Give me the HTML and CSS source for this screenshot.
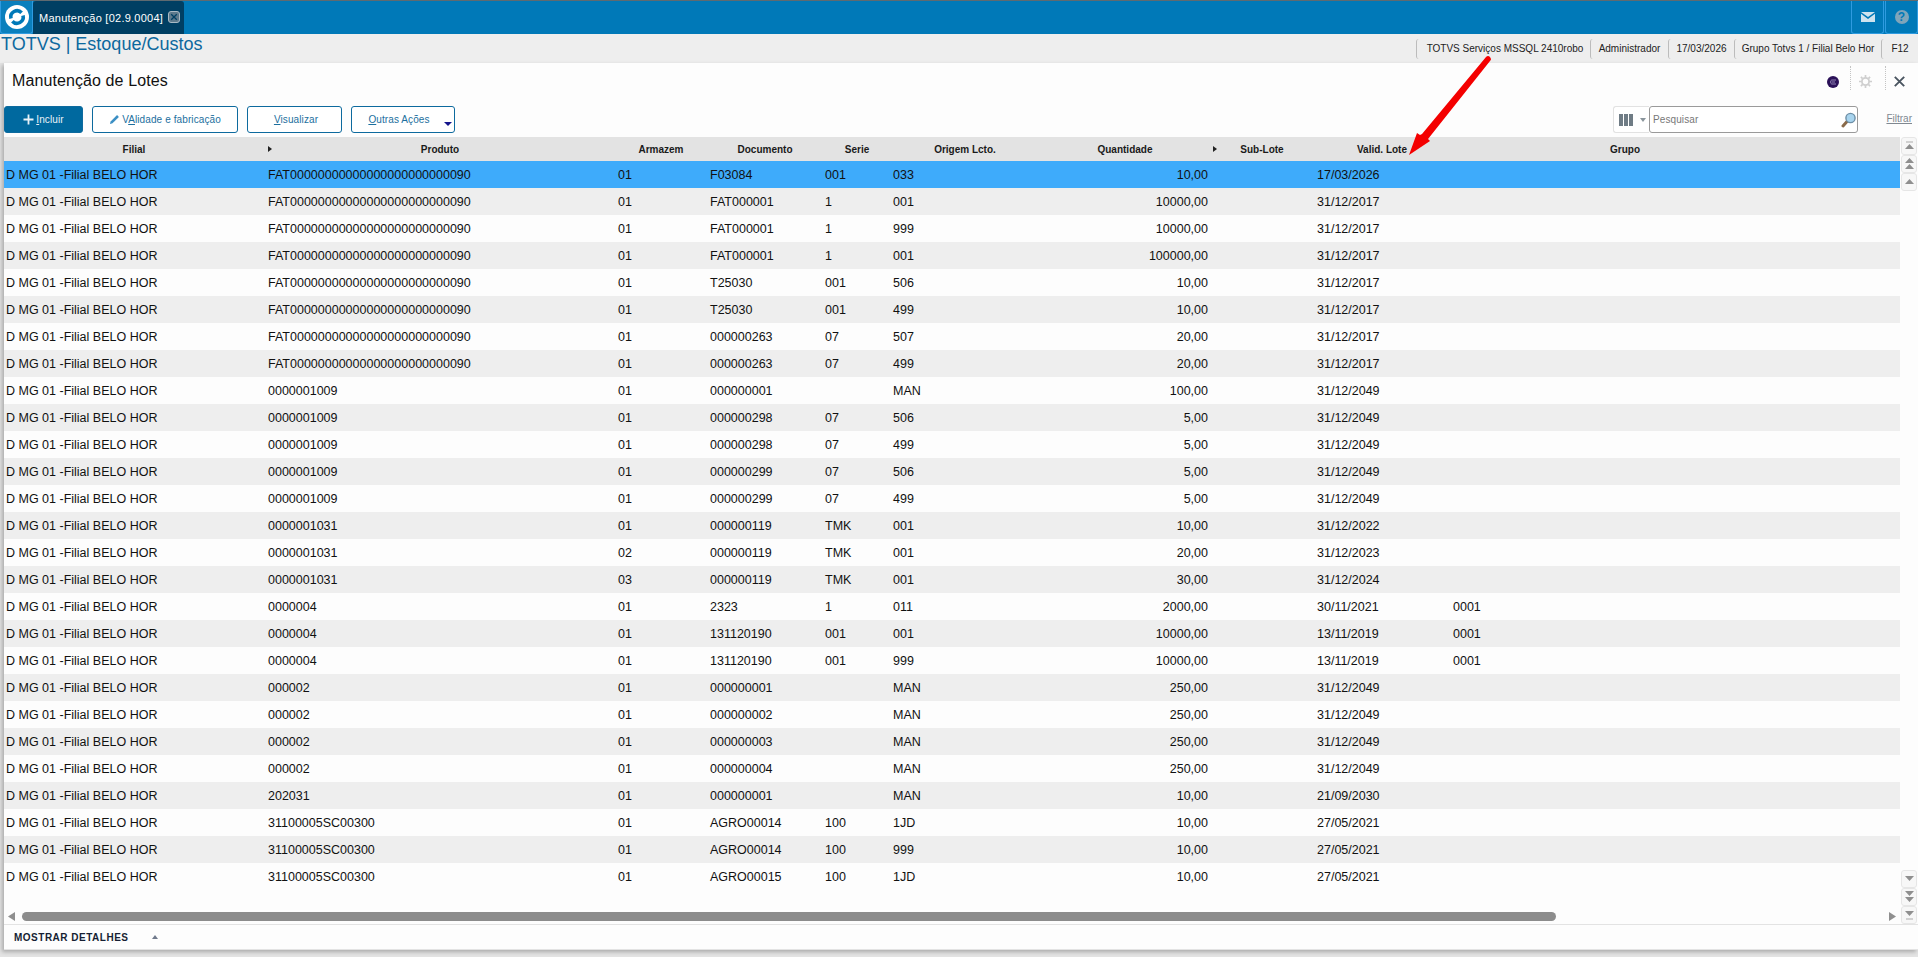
FILE: index.html
```html
<!DOCTYPE html>
<html lang="pt-BR">
<head>
<meta charset="utf-8">
<title>Manutenção de Lotes</title>
<link rel="stylesheet" href="styles.css">
</head>
<body>
<header class="topbar">
  <div class="logo-box">
    <svg width="24" height="24" viewBox="0 0 24 24"><circle cx="12" cy="12" r="12" fill="#fff"/><path d="M6 13.5A6.2 6.2 0 0 1 16.6 7.8" fill="none" stroke="#0079b8" stroke-width="3.6"/><path d="M18 10.5A6.2 6.2 0 0 1 7.4 16.2" fill="none" stroke="#0079b8" stroke-width="3.6"/></svg>
  </div>
  <div class="tab">
    <span class="tab-label">Manutenção [02.9.0004]</span>
    <svg width="12" height="12" viewBox="0 0 12 12"><rect x=".5" y=".5" width="11" height="11" rx="2.5" fill="#5d7a8c" stroke="#a9b9c4"/><path d="M3.2 3.2l5.6 5.6M8.8 3.2l-5.6 5.6" stroke="#003f63" stroke-width="1.3"/></svg>
  </div>
  <div class="topbar-spacer"></div>
  <div class="top-btn">
    <svg width="14" height="10" viewBox="0 0 14 10"><path d="M0 0h14L7 5Z" fill="#cfe3ee"/><path d="M0 1.8V10h14V1.8L7 7Z" fill="#cfe3ee"/></svg>
  </div>
  <div class="top-btn">
    <span class="help">?</span>
  </div>
</header>

<div class="subbar">
  <div class="brand">TOTVS | Estoque/Custos</div>
  <div class="status">
    <span class="status-item s1">TOTVS Serviços MSSQL 2410robo</span>
    <span class="status-item s2">Administrador</span>
    <span class="status-item s3">17/03/2026</span>
    <span class="status-item s4">Grupo Totvs 1 / Filial Belo Hor</span>
    <span class="status-item s5">F12</span>
  </div>
</div>

<main class="panel">
  <div class="title-row">
    <h1 class="title">Manutenção de Lotes</h1>
    <div class="title-icons">
      <span class="orb"><svg width="8" height="6" viewBox="0 0 8 6"><path d="M7 1H3C1 1 1 5 3 5H7M2.5 3H6" fill="none" stroke="#9d90c0" stroke-width=".9"/></svg></span>
      <span class="dots"></span>
      <svg class="gear" width="13" height="13" viewBox="0 0 13 13"><circle cx="6.5" cy="6.5" r="3.6" fill="none" stroke="#cfcfcf" stroke-width="1.8"/><path d="M6.5 0v2.4M6.5 10.6V13M0 6.5h2.4M10.6 6.5H13M1.9 1.9l1.7 1.7M9.4 9.4l1.7 1.7M11.1 1.9L9.4 3.6M3.6 9.4l-1.7 1.7" stroke="#cfcfcf" stroke-width="1.7"/></svg>
      <span class="dots"></span>
      <svg class="close" width="11" height="11" viewBox="0 0 11 11"><path d="M.8.8l9.4 9.4M10.2.8L.8 10.2" stroke="#4a5560" stroke-width="1.9"/></svg>
    </div>
  </div>

  <div class="toolbar">
    <button class="btn primary w1"><svg width="11" height="11" viewBox="0 0 11 11"><path d="M5.5 .5v10M.5 5.5h10" stroke="#e8f2f8" stroke-width="1.8"/></svg><span><u>I</u>ncluir</span></button>
    <button class="btn w2"><svg width="11" height="11" viewBox="0 0 12 12"><path d="M1 11l.8-2.8L8.8 1.2l2 2-7 7Z" fill="#3b8fc4"/></svg><span>V<u>A</u>lidade e fabricação</span></button>
    <button class="btn w3"><span><u>V</u>isualizar</span></button>
    <button class="btn w4"><span><u>O</u>utras Ações</span><i class="btn-caret"></i></button>
    <div class="tool-spacer"></div>
    <div class="columns-btn"><i class="bar"></i><i class="bar"></i><i class="bar"></i><i class="mini-caret"></i></div>
    <div class="search">
      <span class="search-text">Pesquisar</span>
      <svg width="15" height="16" viewBox="0 0 15 16"><path d="M6 9.5L2 14" stroke="#8a6a4a" stroke-width="3" stroke-linecap="round"/><circle cx="9.5" cy="6" r="4.6" fill="#a8d4ee" stroke="#6d8fa6" stroke-width="1.4"/></svg>
    </div>
    <a class="filter">Filtrar</a>
  </div>

  <div class="table-area">
    <div class="table">
      <div class="row head">
        <span class="c c1">Filial<i class="marker"></i></span>
        <span class="c c2">Produto</span>
        <span class="c c3">Armazem</span>
        <span class="c c4">Documento</span>
        <span class="c c5">Serie</span>
        <span class="c c6">Origem Lcto.</span>
        <span class="c c7">Quantidade<i class="marker"></i></span>
        <span class="c c8">Sub-Lote</span>
        <span class="c c9">Valid. Lote</span>
        <span class="c c10">Grupo</span>
      </div>
      <div class="row sel"><span class="c c1">D MG 01 -Filial BELO HOR</span><span class="c c2">FAT00000000000000000000000090</span><span class="c c3">01</span><span class="c c4">F03084</span><span class="c c5">001</span><span class="c c6">033</span><span class="c c7">10,00</span><span class="c c8"></span><span class="c c9">17/03/2026</span><span class="c c10"></span></div>
      <div class="row"><span class="c c1">D MG 01 -Filial BELO HOR</span><span class="c c2">FAT00000000000000000000000090</span><span class="c c3">01</span><span class="c c4">FAT000001</span><span class="c c5">1</span><span class="c c6">001</span><span class="c c7">10000,00</span><span class="c c8"></span><span class="c c9">31/12/2017</span><span class="c c10"></span></div>
      <div class="row"><span class="c c1">D MG 01 -Filial BELO HOR</span><span class="c c2">FAT00000000000000000000000090</span><span class="c c3">01</span><span class="c c4">FAT000001</span><span class="c c5">1</span><span class="c c6">999</span><span class="c c7">10000,00</span><span class="c c8"></span><span class="c c9">31/12/2017</span><span class="c c10"></span></div>
      <div class="row"><span class="c c1">D MG 01 -Filial BELO HOR</span><span class="c c2">FAT00000000000000000000000090</span><span class="c c3">01</span><span class="c c4">FAT000001</span><span class="c c5">1</span><span class="c c6">001</span><span class="c c7">100000,00</span><span class="c c8"></span><span class="c c9">31/12/2017</span><span class="c c10"></span></div>
      <div class="row"><span class="c c1">D MG 01 -Filial BELO HOR</span><span class="c c2">FAT00000000000000000000000090</span><span class="c c3">01</span><span class="c c4">T25030</span><span class="c c5">001</span><span class="c c6">506</span><span class="c c7">10,00</span><span class="c c8"></span><span class="c c9">31/12/2017</span><span class="c c10"></span></div>
      <div class="row"><span class="c c1">D MG 01 -Filial BELO HOR</span><span class="c c2">FAT00000000000000000000000090</span><span class="c c3">01</span><span class="c c4">T25030</span><span class="c c5">001</span><span class="c c6">499</span><span class="c c7">10,00</span><span class="c c8"></span><span class="c c9">31/12/2017</span><span class="c c10"></span></div>
      <div class="row"><span class="c c1">D MG 01 -Filial BELO HOR</span><span class="c c2">FAT00000000000000000000000090</span><span class="c c3">01</span><span class="c c4">000000263</span><span class="c c5">07</span><span class="c c6">507</span><span class="c c7">20,00</span><span class="c c8"></span><span class="c c9">31/12/2017</span><span class="c c10"></span></div>
      <div class="row"><span class="c c1">D MG 01 -Filial BELO HOR</span><span class="c c2">FAT00000000000000000000000090</span><span class="c c3">01</span><span class="c c4">000000263</span><span class="c c5">07</span><span class="c c6">499</span><span class="c c7">20,00</span><span class="c c8"></span><span class="c c9">31/12/2017</span><span class="c c10"></span></div>
      <div class="row"><span class="c c1">D MG 01 -Filial BELO HOR</span><span class="c c2">0000001009</span><span class="c c3">01</span><span class="c c4">000000001</span><span class="c c5"></span><span class="c c6">MAN</span><span class="c c7">100,00</span><span class="c c8"></span><span class="c c9">31/12/2049</span><span class="c c10"></span></div>
      <div class="row"><span class="c c1">D MG 01 -Filial BELO HOR</span><span class="c c2">0000001009</span><span class="c c3">01</span><span class="c c4">000000298</span><span class="c c5">07</span><span class="c c6">506</span><span class="c c7">5,00</span><span class="c c8"></span><span class="c c9">31/12/2049</span><span class="c c10"></span></div>
      <div class="row"><span class="c c1">D MG 01 -Filial BELO HOR</span><span class="c c2">0000001009</span><span class="c c3">01</span><span class="c c4">000000298</span><span class="c c5">07</span><span class="c c6">499</span><span class="c c7">5,00</span><span class="c c8"></span><span class="c c9">31/12/2049</span><span class="c c10"></span></div>
      <div class="row"><span class="c c1">D MG 01 -Filial BELO HOR</span><span class="c c2">0000001009</span><span class="c c3">01</span><span class="c c4">000000299</span><span class="c c5">07</span><span class="c c6">506</span><span class="c c7">5,00</span><span class="c c8"></span><span class="c c9">31/12/2049</span><span class="c c10"></span></div>
      <div class="row"><span class="c c1">D MG 01 -Filial BELO HOR</span><span class="c c2">0000001009</span><span class="c c3">01</span><span class="c c4">000000299</span><span class="c c5">07</span><span class="c c6">499</span><span class="c c7">5,00</span><span class="c c8"></span><span class="c c9">31/12/2049</span><span class="c c10"></span></div>
      <div class="row"><span class="c c1">D MG 01 -Filial BELO HOR</span><span class="c c2">0000001031</span><span class="c c3">01</span><span class="c c4">000000119</span><span class="c c5">TMK</span><span class="c c6">001</span><span class="c c7">10,00</span><span class="c c8"></span><span class="c c9">31/12/2022</span><span class="c c10"></span></div>
      <div class="row"><span class="c c1">D MG 01 -Filial BELO HOR</span><span class="c c2">0000001031</span><span class="c c3">02</span><span class="c c4">000000119</span><span class="c c5">TMK</span><span class="c c6">001</span><span class="c c7">20,00</span><span class="c c8"></span><span class="c c9">31/12/2023</span><span class="c c10"></span></div>
      <div class="row"><span class="c c1">D MG 01 -Filial BELO HOR</span><span class="c c2">0000001031</span><span class="c c3">03</span><span class="c c4">000000119</span><span class="c c5">TMK</span><span class="c c6">001</span><span class="c c7">30,00</span><span class="c c8"></span><span class="c c9">31/12/2024</span><span class="c c10"></span></div>
      <div class="row"><span class="c c1">D MG 01 -Filial BELO HOR</span><span class="c c2">0000004</span><span class="c c3">01</span><span class="c c4">2323</span><span class="c c5">1</span><span class="c c6">011</span><span class="c c7">2000,00</span><span class="c c8"></span><span class="c c9">30/11/2021</span><span class="c c10">0001</span></div>
      <div class="row"><span class="c c1">D MG 01 -Filial BELO HOR</span><span class="c c2">0000004</span><span class="c c3">01</span><span class="c c4">131120190</span><span class="c c5">001</span><span class="c c6">001</span><span class="c c7">10000,00</span><span class="c c8"></span><span class="c c9">13/11/2019</span><span class="c c10">0001</span></div>
      <div class="row"><span class="c c1">D MG 01 -Filial BELO HOR</span><span class="c c2">0000004</span><span class="c c3">01</span><span class="c c4">131120190</span><span class="c c5">001</span><span class="c c6">999</span><span class="c c7">10000,00</span><span class="c c8"></span><span class="c c9">13/11/2019</span><span class="c c10">0001</span></div>
      <div class="row"><span class="c c1">D MG 01 -Filial BELO HOR</span><span class="c c2">000002</span><span class="c c3">01</span><span class="c c4">000000001</span><span class="c c5"></span><span class="c c6">MAN</span><span class="c c7">250,00</span><span class="c c8"></span><span class="c c9">31/12/2049</span><span class="c c10"></span></div>
      <div class="row"><span class="c c1">D MG 01 -Filial BELO HOR</span><span class="c c2">000002</span><span class="c c3">01</span><span class="c c4">000000002</span><span class="c c5"></span><span class="c c6">MAN</span><span class="c c7">250,00</span><span class="c c8"></span><span class="c c9">31/12/2049</span><span class="c c10"></span></div>
      <div class="row"><span class="c c1">D MG 01 -Filial BELO HOR</span><span class="c c2">000002</span><span class="c c3">01</span><span class="c c4">000000003</span><span class="c c5"></span><span class="c c6">MAN</span><span class="c c7">250,00</span><span class="c c8"></span><span class="c c9">31/12/2049</span><span class="c c10"></span></div>
      <div class="row"><span class="c c1">D MG 01 -Filial BELO HOR</span><span class="c c2">000002</span><span class="c c3">01</span><span class="c c4">000000004</span><span class="c c5"></span><span class="c c6">MAN</span><span class="c c7">250,00</span><span class="c c8"></span><span class="c c9">31/12/2049</span><span class="c c10"></span></div>
      <div class="row"><span class="c c1">D MG 01 -Filial BELO HOR</span><span class="c c2">202031</span><span class="c c3">01</span><span class="c c4">000000001</span><span class="c c5"></span><span class="c c6">MAN</span><span class="c c7">10,00</span><span class="c c8"></span><span class="c c9">21/09/2030</span><span class="c c10"></span></div>
      <div class="row"><span class="c c1">D MG 01 -Filial BELO HOR</span><span class="c c2">31100005SC00300</span><span class="c c3">01</span><span class="c c4">AGRO00014</span><span class="c c5">100</span><span class="c c6">1JD</span><span class="c c7">10,00</span><span class="c c8"></span><span class="c c9">27/05/2021</span><span class="c c10"></span></div>
      <div class="row"><span class="c c1">D MG 01 -Filial BELO HOR</span><span class="c c2">31100005SC00300</span><span class="c c3">01</span><span class="c c4">AGRO00014</span><span class="c c5">100</span><span class="c c6">999</span><span class="c c7">10,00</span><span class="c c8"></span><span class="c c9">27/05/2021</span><span class="c c10"></span></div>
      <div class="row"><span class="c c1">D MG 01 -Filial BELO HOR</span><span class="c c2">31100005SC00300</span><span class="c c3">01</span><span class="c c4">AGRO00015</span><span class="c c5">100</span><span class="c c6">1JD</span><span class="c c7">10,00</span><span class="c c8"></span><span class="c c9">27/05/2021</span><span class="c c10"></span></div>
    </div>
    <div class="vscroll">
      <div class="vgroup">
        <span class="vbtn"><svg width="9" height="10" viewBox="0 0 9 10"><path d="M1 1h7" stroke="#c4c4c4" stroke-width="1.5"/><path d="M4.5 3L9 8H0Z" fill="#8f8f8f"/></svg></span>
        <span class="vbtn"><svg width="9" height="12" viewBox="0 0 9 12"><path d="M4.5 0L9 5H0ZM4.5 6L9 11H0Z" fill="#8f8f8f"/></svg></span>
        <span class="vbtn"><svg width="9" height="6" viewBox="0 0 9 6"><path d="M4.5 0L9 5H0Z" fill="#8f8f8f"/></svg></span>
      </div>
      <div class="vgroup">
        <span class="vbtn"><svg width="9" height="6" viewBox="0 0 9 6"><path d="M4.5 5L9 0H0Z" fill="#8f8f8f"/></svg></span>
        <span class="vbtn"><svg width="9" height="12" viewBox="0 0 9 12"><path d="M4.5 5L9 0H0ZM4.5 11L9 6H0Z" fill="#8f8f8f"/></svg></span>
        <span class="vbtn"><svg width="9" height="10" viewBox="0 0 9 10"><path d="M4.5 6L9 1H0Z" fill="#8f8f8f"/><path d="M1 9h7" stroke="#c4c4c4" stroke-width="1.5"/></svg></span>
      </div>
    </div>
  </div>

  <div class="hscroll">
    <svg class="harrow" width="7" height="9" viewBox="0 0 7 9"><path d="M0 4.5L7 0v9Z" fill="#8f8f8f"/></svg>
    <div class="htrack"><div class="hthumb"></div></div>
    <svg class="harrow" width="7" height="9" viewBox="0 0 7 9"><path d="M7 4.5L0 0v9Z" fill="#8f8f8f"/></svg>
  </div>

  <div class="details">
    <span class="details-label">MOSTRAR DETALHES</span>
    <i class="details-caret"></i>
  </div>
</main>

<svg class="annotation" width="90" height="105" viewBox="0 0 90 105"><path d="M78 3Q80 1 82 3L83 5Q83 6 82 7L20 85L22 87L1 101L9 79L12 81L14 80Z" fill="#f40000"/></svg>
</body>
</html>
```

FILE: styles.css
```css
* { box-sizing: border-box; }
html, body { margin: 0; height: 100%; overflow: hidden; }
body {
  position: relative;
  width: 1918px;
  height: 957px;
  background: #e4e4e4;
  font-family: "Liberation Sans", Arial, sans-serif;
  color: #111;
  display: flex;
  flex-direction: column;
}

/* top bar */
.topbar {
  height: 34px;
  flex: none;
  display: flex;
  background: #0079b8;
  border-top: 1px solid #5f6a70;
}
.logo-box {
  width: 33px;
  display: flex;
  align-items: center;
  justify-content: center;
  background: #0a7fbd;
  border: 1px solid #2f9be0;
  border-top: 0;
  border-radius: 0 0 3px 3px;
}
.tab {
  width: 151px;
  display: flex;
  align-items: center;
  background: #003f63;
  border-radius: 3px 3px 0 0;
  padding-left: 6px;
  gap: 5px;
  color: #fff;
  font-size: 11px;
  letter-spacing: .25px;
}
.tab svg { margin-top: -1px; }
.topbar-spacer { flex: 1; }
.top-btn {
  width: 33px;
  margin-left: 1px;
  display: flex;
  align-items: center;
  justify-content: center;
  border: 1px solid #2f9be0;
  border-top: 0;
  border-radius: 0 0 3px 3px;
}
.help {
  width: 14px;
  height: 14px;
  border-radius: 50%;
  background: #7fa5ba;
  color: #0079b8;
  font-size: 12px;
  font-weight: bold;
  line-height: 14px;
  text-align: center;
}

/* sub bar */
.subbar {
  height: 29px;
  flex: none;
  display: flex;
  justify-content: space-between;
  background: #eeeeee;
}
.brand {
  padding-left: 1px;
  font-size: 18px;
  line-height: 21px;
  color: #0c689e;
}
.status { display: flex; align-items: center; height: 29px; padding-top: 1px; }
.status-item {
  height: 20px;
  line-height: 20px;
  font-size: 10px;
  color: #222;
  border-left: 1px solid #bcbcbc;
  border-radius: 3px 0 0 3px;
  text-align: center;
  white-space: nowrap;
}
.s1 { width: 174px; padding-left: 3px; }
.s2 { width: 78px; }
.s3 { width: 66px; }
.s4 { width: 147px; }
.s5 { width: 37px; }

/* main panel */
.panel {
  flex: none;
  height: 887px;
  margin-left: 4px;
  background: #fdfdfd;
  display: flex;
  flex-direction: column;
  box-shadow: -2px 2px 4px rgba(0,0,0,.25);
}
.title-row {
  height: 43px;
  flex: none;
  display: flex;
  align-items: center;
  justify-content: space-between;
  padding: 0 13px 7px 8px;
}
.title {
  margin: 0;
  font-size: 16px;
  font-weight: normal;
  color: #111;
  letter-spacing: .1px;
}
.title-icons { display: flex; align-items: center; padding-top: 1px; }
.orb {
  width: 12px;
  height: 12px;
  margin-right: 11px;
  border-radius: 50%;
  background: #2b1158;
  display: flex;
  align-items: center;
  justify-content: center;
}
.dots { width: 0; height: 24px; margin-top: -7px; border-left: 1px dotted #c4c4c4; }
.gear { margin: 0 13px 0 8px; }
.close { margin-left: 8px; }

/* toolbar */
.toolbar {
  height: 31px;
  flex: none;
  display: flex;
  align-items: flex-start;
}
.btn {
  height: 27px;
  margin-right: 9px;
  padding: 0;
  display: flex;
  align-items: center;
  justify-content: center;
  gap: 2px;
  position: relative;
  background: #fff;
  border: 1px solid #0d6a9e;
  border-radius: 3px;
  font: 10px "Liberation Sans", Arial, sans-serif;
  letter-spacing: .1px;
  color: #1c6f9e;
}
.primary { background: #00699f; color: #e8f2f8; }
.w1 { width: 79px; }
.w2 { width: 146px; }
.w3 { width: 95px; padding-left: 3px; }
.w4 { width: 104px; padding-right: 8px; }
.btn-caret {
  position: absolute;
  right: 2px;
  bottom: 6px;
  border: 4px solid transparent;
  border-top: 4px solid #14148c;
  border-bottom: 0;
}
.tool-spacer { flex: 1; }
.columns-btn {
  width: 36px;
  height: 27px;
  display: flex;
  align-items: center;
  gap: 1px;
  padding-left: 5px;
  background: #fff;
  border: 1px solid #e2e2e2;
  border-right: 0;
  border-radius: 3px 0 0 3px;
}
.bar { width: 4px; height: 12px; background: #6f7c85; }
.mini-caret {
  margin-left: 6px;
  border: 3.5px solid transparent;
  border-top: 4px solid #8a959c;
  border-bottom: 0;
}
.search {
  width: 209px;
  height: 27px;
  display: flex;
  align-items: center;
  justify-content: space-between;
  padding: 0 1px 0 3px;
  background: #fff;
  border: 1px solid #9a9a9a;
  border-radius: 3px;
}
.search-text { font-size: 10px; letter-spacing: .1px; color: #777; }
.filter {
  width: 60px;
  padding: 7px 6px 0 0;
  text-align: right;
  font-size: 10px;
  color: #808890;
  text-decoration: underline;
}

/* grid */
.table-area { height: 775px; flex: none; display: flex; justify-content: space-between; }
.table { width: 1896px; }
.row {
  height: 27px;
  display: grid;
  grid-template-columns: 260px 352px 90px 118px 66px 150px 170px 104px 136px 350px;
  align-items: center;
  font-size: 12.5px;
  background: #fdfdfd;
  color: #111;
}
.row:nth-child(odd) { background: #eeeeee; }
.row.sel { background: #3eabfb; }
.row.head {
  height: 24px;
  background: #e3e3e3;
  font-size: 10px;
  font-weight: bold;
  color: #1a1a1a;
}
.c { display: block; padding-left: 3px; white-space: nowrap; position: relative; }
.c1 { padding-left: 2px; }
.c2 { padding-left: 4px; }
.c3 { padding-left: 2px; }
.c4 { padding-left: 4px; }
.c5 { padding-left: 1px; }
.c7 { padding: 0 2px 0 0; text-align: right; }
.head .c { padding: 0; text-align: center; }
.marker {
  position: absolute;
  top: 2px;
  right: -8px;
  border: 3.5px solid transparent;
  border-left: 4px solid #222;
  border-right: 0;
}
.head .c7 .marker { right: -7px; }

/* scrollers */
.vscroll {
  width: 17px;
  display: flex;
  flex-direction: column;
  justify-content: space-between;
  padding-right: 1px;
  height: 787px;
}
.vgroup { display: flex; flex-direction: column; }
.vbtn {
  height: 18px;
  display: flex;
  align-items: center;
  justify-content: center;
  background: #f7f7f7;
  border: 1px solid #e6e6e6;
  border-radius: 3px;
}
.hscroll {
  height: 12px;
  flex: none;
  display: flex;
  align-items: flex-start;
  padding: 0 22px 0 4px;
  gap: 7px;
}
.htrack { flex: 1; height: 9px; }
.hthumb { width: 1534px; height: 9px; background: #8c8c8c; border-radius: 5px; }

/* details */
.details {
  height: 26px;
  flex: none;
  display: flex;
  align-items: center;
  padding-left: 10px;
  background: #fdfdfd;
  border-top: 1px solid #e3e3e3;
  border-bottom: 1px solid #e3e3e3;
  font-size: 10px;
  font-weight: bold;
  letter-spacing: .5px;
  color: #161f33;
}
.details-caret {
  margin-left: 24px;
  border: 3.5px solid transparent;
  border-bottom: 4px solid #707a8c;
  border-top: 0;
}

/* red annotation arrow over the grid */
.annotation { position: absolute; left: 1408px; top: 54px; }
```
